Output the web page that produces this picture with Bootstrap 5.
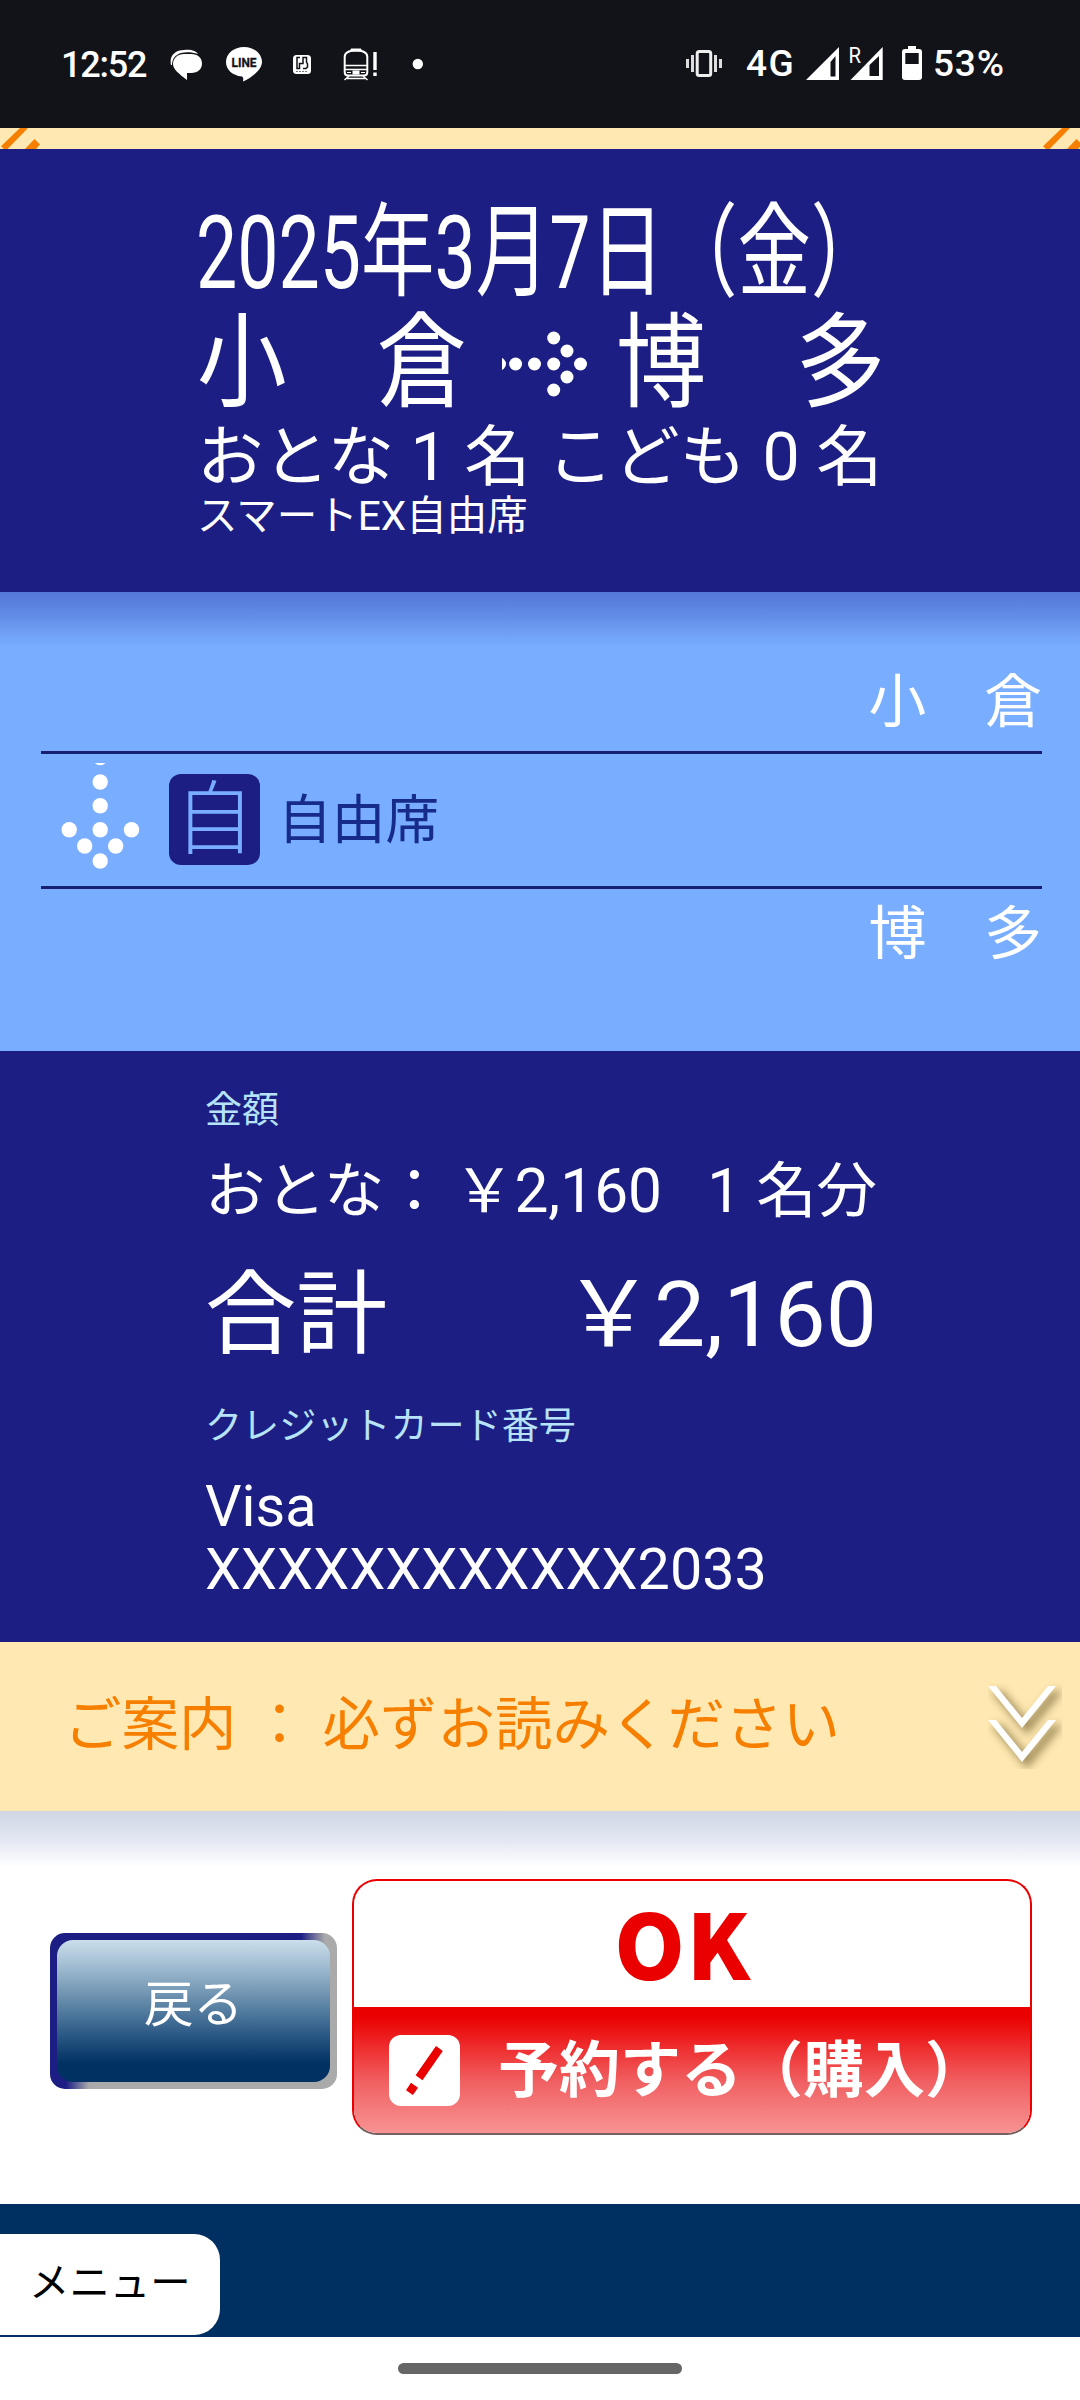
<!DOCTYPE html>
<html lang="ja">
<head>
<meta charset="utf-8">
<meta name="viewport" content="width=device-width, initial-scale=1">
<title>予約内容の確認</title>
<link href="https://cdn.jsdelivr.net/npm/bootstrap@5.3.0/dist/css/bootstrap.min.css" rel="stylesheet">
<script src="https://cdn.jsdelivr.net/npm/bootstrap@5.3.0/dist/js/bootstrap.bundle.min.js"></script>
<style>
:root{--navy:#1c1e84;--sky:#78adff;--cream:#ffe8b1;--orange:#f77f00;--deep:#003061;--red:#eb0000}
body{width:1080px;height:2400px;overflow:hidden;background:#fff;color:#fff;font-family:Roboto,"Noto Sans CJK JP",sans-serif}
svg{display:block;flex:none}
.ln{white-space:pre}
.squeeze{display:block;transform-origin:0 50%;white-space:pre}
.statusbar{height:128px;background:#121318;padding:0 76px 0 61px;font-weight:500}
.sb-time{font-size:36px;line-height:36px;width:86px;letter-spacing:-1.2px;margin-top:1px}
.sb-num{font-size:37px;line-height:36px}
.ic-chat{margin-left:23px}.ic-line{margin-left:21px}.ic-app{margin-left:29px}.ic-train{margin-left:31px}.ic-dot{margin-left:33px}
.sb-net{margin-left:23px;width:60px;letter-spacing:1.5px}
.ic-sim2{margin-left:5px}.ic-batt{margin-left:18px}
.sb-pct{margin-left:11px;width:71px;letter-spacing:.8px}
.strip{height:21px;background:var(--cream)}
.trip{height:443px;background:var(--navy);padding:48px 0 0 197px}
.t-date{height:111px;line-height:111px;font-size:102px}
.t-date .squeeze{transform:translate(-1px,1px) scaleX(.72)}
.t-route{height:110px;line-height:112px;font-size:103px}
.t-route .stn{width:270px}
.t-route .squeeze{transform:translate(0,1px) scaleX(.872)}
.t-arrow{margin:2px 28px 0 35px}
.t-pax{height:77px;line-height:78px;font-size:66.35px}
.t-kind{height:41px;line-height:42px;font-size:40.5px}
.legs{height:459px;padding:73px 38px 0 41px;background:linear-gradient(#5577d7 0,#5f88e4 20px,#6c9af0 36px,var(--sky) 54px)}
.l-stn{font-size:57.8px;line-height:75px;height:86px;text-align:right}
.l-stn.to{line-height:90px}
.l-mid{height:138px;border-top:3px solid #172070;border-bottom:3px solid #172070;padding-left:20px}
.l-arrow{margin-bottom:6px}
.l-badge{width:91px;height:91px;border-radius:12px;background:var(--navy);color:var(--sky);font-weight:300;font-size:80px;line-height:91px;margin:0 0 1px 29px}
.l-badge span{display:block;transform:translateY(1px)}
.l-seat{font-size:53.7px;line-height:80px;color:#172b8b;margin:2px 0 0 18px}
.price{height:591px;background:var(--navy);padding:36px 203px 0 205px}
.p-cap{color:#b6e3f8;font-size:37.1px;line-height:47px;height:46px}
.p-row{font-size:60.4px;line-height:80px;height:80px;margin-top:19px}
.p-row .yen{margin-left:-36px}
.p-sum{font-size:91.2px;line-height:100px;height:100px;margin-top:33px}
.p-cap.no{margin-top:38px}
.p-card{font-size:57.5px;line-height:62.5px;margin-top:27px}
.notice{height:169px;background:var(--cream);color:var(--orange);font-size:57.5px;padding:0 18px 0 64px}
.n-chev{margin-bottom:1px}
.actions{height:393px;padding:68px 48px 0 50px;background:linear-gradient(#d0d6e4 0,#e3e7f3 29px,#fff 56px)}
.b-back{width:287px;height:156px;margin-top:54px;border-radius:15px;padding:7px;
 background:linear-gradient(90deg,var(--navy) 251px,#aaa 275px) top/100% 50% no-repeat,linear-gradient(90deg,var(--navy) 16px,#aaa 39px) bottom/100% 50% no-repeat}
.b-back span{border-radius:16px;padding-bottom:12px;color:#fff;font-size:49.5px;background:linear-gradient(#cadeeb 0,#9db9cf 20%,#5f86a6 45%,#2f5c88 65%,#013162 87%)}
.b-ok{width:680px;height:256px;border:2px solid var(--red);border-bottom:2px solid #76605f;border-radius:25px;margin-left:15px;background:#fff;overflow:hidden}
.b-top{height:126px;color:var(--red);font:900 90px/121px "Noto Sans CJK JP",sans-serif;padding-right:18px;letter-spacing:1.5px}
.b-bot{height:126px;background:linear-gradient(var(--red) 10px,#f16062 75px,#f79393 126px);font-weight:700;font-size:61px;padding-left:35px;color:#fff}
.b-bot .ln{margin:3px 0 0 38px}
.foot{height:133px;background:var(--deep);padding-top:30px}
.menu{width:220px;height:101px;border-radius:0 26px 26px 0;color:#000;font-size:40.4px;line-height:100px;padding-left:29px;background:#fff}
.gest{height:63px;background:#fff;padding-top:26px}
.gest div{width:284px;height:11px;border-radius:6px;background:#666}
</style>
</head>
<body>
<header class="statusbar d-flex align-items-center">
  <div class="sb-time">12:52</div>
  <svg class="ic-chat" width="34" height="36" viewBox="170 47 34 36"><path d="M171 66C169 57 175 51 184 51C191 50 196 52 198 55C192 53 186 53 181 54C175 56 172 60 172 66z" fill="#fff"/><path d="M187 81C179 75 173 70 173 65C173 59 178 55 184 55H191C198 55 202 59 202 64.500C202 70 198 74 191 74H187z" fill="#fff"/></svg>
  <svg class="ic-line" width="38" height="36" viewBox="225 47 38 36"><path d="M244 48C254 48 262 54.500 262 63C262 71 251 79 243 82.500C243 80 244 79 242 77.500C232 76.500 226 70.500 226 63C226 54.500 234 48 244 48z" fill="#fff"/><text x="231.500" y="67.800" font-size="12.500" font-weight="700" textLength="25" lengthAdjust="spacingAndGlyphs" fill="#121318" stroke="#121318" stroke-width=".3">LINE</text></svg>
  <svg class="ic-app" width="20" height="36" viewBox="292 47 20 36"><rect x="293" y="56" width="18" height="19" rx="3.500" fill="#fff"/><path d="M300 58.500H297V69.500H299.500V64.500H303V58.500H306.500V63L307.500 65V68L306 69.500H303" fill="none" stroke="#121318" stroke-width="1.500"/><path d="M296 72.500H308" stroke="#777" stroke-width="1" stroke-dasharray="2 1"/></svg>
  <svg class="ic-train" width="36" height="36" viewBox="343 47 36 36"><g fill="none" stroke="#fff" stroke-width="2"><path d="M344.700 73V58C344.700 53 350 51.500 356 51.500S367.300 53 367.300 58V73C367.300 76 366 76.500 364 76.500H348C346 76.500 344.700 76 344.700 73z"/><path d="M345 66.500H367M345 70.500H367" stroke-width="1.500"/><path d="M349 77L344.500 81M363 77L367.500 81M347 79.500H365" stroke-width="1.500"/></g><path d="M351 52V50H361V52z" fill="#fff" stroke="#fff"/><path d="M347 73.500H351M361 73.500H365" stroke="#fff" stroke-width="1"/><path d="M352.500 73.500H359.500" stroke="#fff" stroke-width="4"/><path d="M375 53V71M375 73.500V77" stroke="#fff" stroke-width="3.400"/></svg>
  <svg class="ic-dot" width="12" height="36" viewBox="412 47 12 36"><circle cx="417.800" cy="65" r="5.200" fill="#fff"/></svg>
  <svg class="ms-auto" width="38" height="36" viewBox="685 47 38 36"><rect x="697.200" y="52.500" width="13.500" height="24" rx="2" fill="none" stroke="#eee" stroke-width="3"/><path d="M692.500 56V73M715.500 56V73M687.500 60V69M720.500 60V69" stroke="#ddd" stroke-width="3"/></svg>
  <div class="sb-num sb-net">4G</div>
  <svg width="34" height="36" viewBox="806 46 34 36"><path fill-rule="evenodd" d="M806 80L839 47V80zM835.500 56L830.500 62V76.500H835.500z" fill="#fff"/></svg>
  <svg class="ic-sim2" width="39" height="56" viewBox="845 36 39 56"><text x="848.500" y="63" font-size="22" font-weight="400" textLength="12.500" lengthAdjust="spacingAndGlyphs" fill="#fff">R</text><path fill-rule="evenodd" d="M850.500 80L882.700 47V80zM879 56L869.500 65V76H879z" fill="#fff"/></svg>
  <svg class="ic-batt" width="20" height="36" viewBox="902 46 20 36"><path fill-rule="evenodd" d="M908 46H916V49H919Q922 49 922 52V77Q922 80 919 80H905Q902 80 902 77V52Q902 49 905 49H908zM905.300 53V64H918.700V53z" fill="#fff"/></svg>
  <div class="sb-num sb-pct">53%</div>
</header>
<div class="strip d-flex justify-content-between">
  <svg width="42" height="21" viewBox="0 128 42 21"><path d="M20 128H28L7.500 149H4L1 146.300zM34.500 139L40 144.500L36 149H25z" fill="#f77f00"/></svg>
  <svg width="38" height="21" viewBox="0 128 38 21"><path d="M20 128H28L7.500 149H4L1 146.300zM34.500 139L40 144.500L36 149H25z" fill="#f77f00"/></svg>
</div>
<section class="trip">
  <div class="t-date"><span class="squeeze">2025年3月7日（金）</span></div>
  <div class="t-route d-flex align-items-center">
    <div class="stn"><span class="squeeze">小　倉</span></div>
    <svg class="t-arrow" width="86" height="66" viewBox="502 331 86 66"><g fill="#fff"><circle cx="499.500" cy="364" r="6.500"/><circle cx="515.600" cy="364" r="6.500"/><circle cx="534.500" cy="364" r="6.500"/><circle cx="553.700" cy="364" r="6.500"/><circle cx="580.500" cy="364" r="6.500"/><circle cx="567" cy="351" r="6.500"/><circle cx="567" cy="377" r="6.500"/><circle cx="553.700" cy="338" r="6.500"/><circle cx="553.700" cy="390" r="6.500"/></g></svg>
    <div class="stn"><span class="squeeze">博　多</span></div>
  </div>
  <div class="t-pax ln">おとな 1 名 こども 0 名</div>
  <div class="t-kind ln">スマートEX自由席</div>
</section>
<section class="legs">
  <div class="l-stn">小　倉</div>
  <div class="l-mid d-flex align-items-center">
    <svg class="l-arrow" width="79" height="108" viewBox="61 763 79 108"><g fill="#fff"><circle cx="100.200" cy="757.600" r="7.700"/><circle cx="100.200" cy="782" r="7.700"/><circle cx="100.200" cy="805.700" r="7.700"/><circle cx="100.200" cy="829.700" r="7.700"/><circle cx="100.200" cy="861" r="7.700"/><circle cx="84.700" cy="846" r="7.700"/><circle cx="115.700" cy="846" r="7.700"/><circle cx="69.200" cy="829.700" r="7.700"/><circle cx="131.500" cy="829.700" r="7.700"/></g></svg>
    <div class="l-badge text-center"><span>自</span></div>
    <div class="l-seat">自由席</div>
  </div>
  <div class="l-stn to">博　多</div>
</section>
<section class="price">
  <div class="p-cap ln">金額</div>
  <div class="p-row ln d-flex justify-content-between"><span>おとな：</span><span class="yen">￥2,160</span><span>1 名分</span></div>
  <div class="p-sum ln d-flex justify-content-between"><span>合計</span><span>￥2,160</span></div>
  <div class="p-cap no ln">クレジットカード番号</div>
  <div class="p-card">Visa<br>XXXXXXXXXXXX2033</div>
</section>
<section class="notice d-flex align-items-center justify-content-between">
  <div class="ln">ご案内 ： 必ずお読みください</div>
  <svg class="n-chev" width="74" height="86" viewBox="988 1683 74 86"><defs><filter id="sh" x="-20%" y="-20%" width="150%" height="150%"><feGaussianBlur stdDeviation="4.500"/></filter></defs><g transform="translate(5 5)" filter="url(#sh)" fill="#6b5a2a" opacity=".62"><path d="M986 1686H998L1022 1715L1046 1686H1058L1022 1730z"/><path d="M986 1720H998L1022 1749L1046 1720H1058L1022 1764z"/></g><g fill="#fff"><path d="M988 1686H996L1022 1718L1048 1686H1056L1022 1728z"/><path d="M988 1720H996L1022 1752L1048 1720H1056L1022 1762z"/></g></svg>
</section>
<section class="actions d-flex align-items-start">
  <button type="button" class="b-back border-0 d-flex"><span class="flex-fill align-self-stretch d-flex align-items-center justify-content-center">戻る</span></button>
  <div class="b-ok" role="button">
    <div class="b-top text-center">OK</div>
    <div class="b-bot d-flex align-items-center"><svg width="71" height="71" viewBox="389 2034 71 71"><rect x="389" y="2034" width="71" height="71" rx="12" fill="#fff"/><path d="M436 2045L442.800 2050L422.500 2079.300L415.600 2074.300zM411 2081.700L418 2086.700L412.900 2094L406 2089.300z" fill="#eb0000"/></svg><span class="ln">予約する（購入）</span></div>
  </div>
</section>
<footer class="foot"><div class="menu ln">メニュー</div></footer>
<div class="gest d-flex justify-content-center"><div></div></div>
</body>
</html>
